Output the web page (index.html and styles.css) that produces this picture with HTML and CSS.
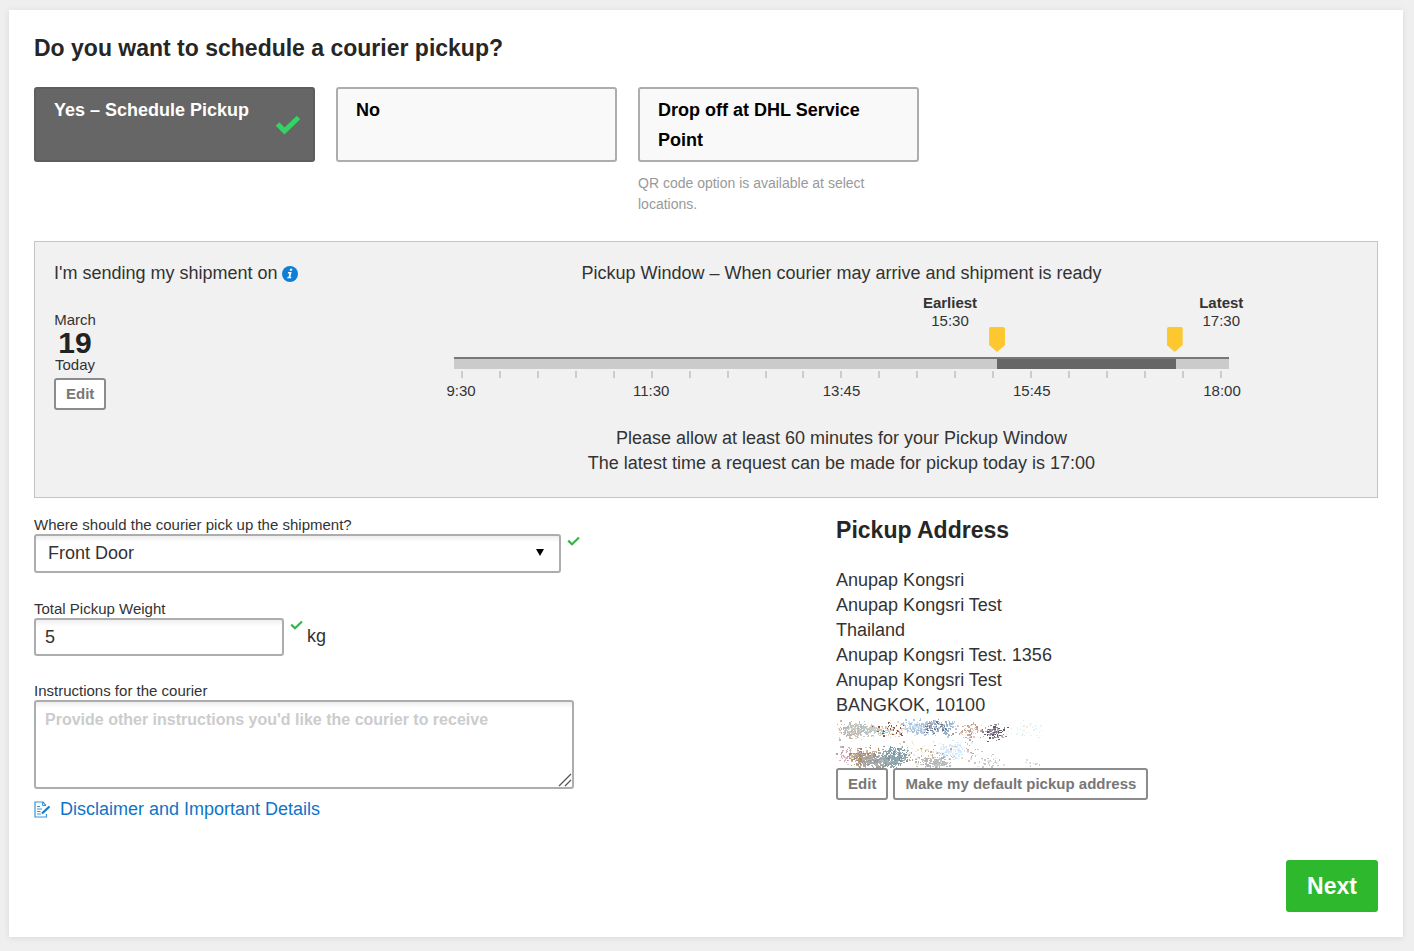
FILE: index.html
```html
<!DOCTYPE html>
<html lang="en">
<head>
<meta charset="utf-8">
<meta name="viewport" content="width=device-width, initial-scale=1">
<title>Schedule a courier pickup</title>
<link rel="stylesheet" href="styles.css">
</head>
<body>
<main class="card">
  <h1 class="title">Do you want to schedule a courier pickup?</h1>

  <div class="options">
    <button type="button" class="option option-selected" aria-pressed="true">
      <span>Yes – Schedule Pickup</span>
      <svg class="option-check" width="26" height="20" viewBox="0 0 26 20" aria-hidden="true"><path d="M2.500 9L9.500 16L23.500 2.500" fill="none" stroke="#33d463" stroke-width="5"/></svg>
    </button>
    <button type="button" class="option" aria-pressed="false">No</button>
    <div class="option-group">
      <button type="button" class="option" aria-pressed="false">Drop off at DHL Service Point</button>
      <p class="option-note">QR code option is available at select locations.</p>
    </div>
  </div>

  <section class="window">
    <div class="date">
      <p class="date-label">I'm sending my shipment on
        <svg width="16" height="16" viewBox="0 0 16 16" aria-hidden="true"><circle cx="8" cy="8" r="8" fill="#0f7fd6"/><path d="M8.1 2.8h2.3l-.5 2H7.6zM6.1 6.1h3.5l-1.2 4.8h1l-.3 1.3H5.2l.3-1.3h1l.9-3.5h-1.600z" fill="#fff"/></svg>
      </p>
      <div class="day">
        <span>March</span>
        <strong class="day-number">19</strong>
        <span>Today</span>
      </div>
      <button type="button" class="small-button">Edit</button>
    </div>

    <div class="timeline">
      <h2 class="timeline-title">Pickup Window – When courier may arrive and shipment is ready</h2>
      <div class="slider">
        <label class="bound bound-earliest" for="earliest"><b>Earliest</b><span>15:30</span></label>
        <label class="bound bound-latest" for="latest"><b>Latest</b><span>17:30</span></label>
        <input class="handle" id="earliest" type="range" min="0" max="1000" value="705">
        <input class="handle" id="latest" type="range" min="0" max="1000" value="939">
        <div class="track"><div class="track-fill" style="margin-left:70.1%;width:23.1%"></div></div>
      </div>
      <div class="ticks">
        <i></i><i></i><i></i><i></i><i></i><i></i><i></i><i></i><i></i><i></i><i></i><i></i><i></i><i></i><i></i><i></i><i></i><i></i><i></i><i></i><i></i>
      </div>
      <div class="hours"><span>9:30</span><span>11:30</span><span>13:45</span><span>15:45</span><span>18:00</span></div>
      <p class="message">Please allow at least 60 minutes for your Pickup Window<br>The latest time a request can be made for pickup today is 17:00</p>
    </div>
  </section>

  <div class="details">
    <form class="form">
      <div class="field">
        <label for="place">Where should the courier pick up the shipment?</label>
        <div class="control">
          <div class="select-wrap">
            <select id="place" class="box place"><option>Front Door</option></select>
            <svg class="arrow" width="8" height="7" viewBox="0 0 8 7" aria-hidden="true"><path d="M0 0h8L4 7z"/></svg>
          </div>
          <svg class="valid" width="13" height="10" viewBox="0 0 13 10" aria-hidden="true"><path d="M1.200 4.600L5 8.200L12 1.500" fill="none" stroke="#34b54a" stroke-width="2.200"/></svg>
        </div>
      </div>
      <div class="field">
        <label for="weight">Total Pickup Weight</label>
        <div class="control">
          <input id="weight" class="box weight" type="text" value="5">
          <svg class="valid" width="13" height="10" viewBox="0 0 13 10" aria-hidden="true"><path d="M1.200 4.600L5 8.200L12 1.500" fill="none" stroke="#34b54a" stroke-width="2.200"/></svg>
          <span class="unit">kg</span>
        </div>
      </div>
      <div class="field field-notes">
        <label for="notes">Instructions for the courier</label>
        <div class="notes-wrap">
          <textarea id="notes" class="box notes" placeholder="Provide other instructions you'd like the courier to receive"></textarea>
          <svg class="grip" width="14" height="14" viewBox="0 0 14 14" aria-hidden="true"><path d="M1 13L13 1M7 13L13 7" stroke="#555" stroke-width="1.300"/></svg>
        </div>
      </div>
      <a class="disclaimer" href="#">
        <svg width="17" height="17" viewBox="0 0 17 17" fill="none" stroke="#3c93d8" aria-hidden="true"><path d="M11.500 5V4L9 1H1v15h11.500v-3" stroke-width="1.200"/><path d="M8.500 1v3.500h3.500M3 5.500h3M3 8h5M3 10.500h3.500M3 13h4" stroke-width="1"/><path d="M8 12.500L15.500 5.500" stroke="#1779c4" stroke-width="2.200"/></svg>
        <span>Disclaimer and Important Details</span>
      </a>
    </form>

    <section class="address">
      <h2 class="title">Pickup Address</h2>
      <address>Anupap Kongsri<br>Anupap Kongsri Test<br>Thailand<br>Anupap Kongsri Test. 1356<br>Anupap Kongsri Test<br>BANGKOK, 10100</address>
      <svg class="smudge" id="smudge" width="206" height="50" viewBox="0 0 206 50" shape-rendering="crispEdges" aria-hidden="true"></svg>
      <div class="address-actions">
        <button type="button" class="small-button">Edit</button>
        <button type="button" class="small-button">Make my default pickup address</button>
      </div>
    </section>
  </div>

  <div class="footer"><button type="button" class="next">Next</button></div>
</main>
<script src="smudge.js"></script>
</body>
</html>
```
FILE: styles.css
```css
* { box-sizing: border-box; }
body {
  margin: 0;
  padding: 10px 11px 13px 9px;
  background: #efefef;
  color: #333;
  font: 18px/25px "Liberation Sans", Arial, sans-serif;
}
h1, h2, p { margin: 0; font-weight: normal; }
button, input, select, textarea { font: inherit; color: inherit; }
.card {
  padding: 23px 25px 25px;
  background: #fff;
  box-shadow: 0 1px 6px #d8d8d8;
}
.card .title {
  font-size: 23px;
  line-height: 30px;
  font-weight: bold;
  color: #262626;
}
.options {
  display: grid;
  grid-template-columns: repeat(3, 1fr);
  gap: 21px;
  max-width: 885px;
  margin-top: 24px;
  align-items: start;
}
.option {
  display: flex;
  align-items: flex-start;
  justify-content: space-between;
  width: 100%;
  height: 75px;
  padding: 6px 20px 7px 18px;
  border: 2px solid #adadad;
  border-radius: 3px;
  background: #f9f9f9;
  color: #000;
  font-weight: bold;
  line-height: 30px;
  text-align: left;
}
.option-selected {
  padding-right: 12px;
  border-color: #5e5e5e;
  background: #666;
  color: #fff;
}
.option-check { margin-top: 20px; }
.option-note {
  margin-top: 11px;
  padding-right: 40px;
  color: #999;
  font-size: 14px;
  line-height: 21px;
}
.window {
  display: flex;
  margin-top: 26px;
  padding: 19px 148px 21px 19px;
  border: 1px solid #c4c4c4;
  background: #f1f1f1;
}
.date { flex: 0 0 400px; }
.date-label { display: flex; align-items: center; gap: 4px; }
.day {
  display: flex;
  flex-direction: column;
  width: 42px;
  margin: 25px 0 4px;
  align-items: center;
  font-size: 15px;
  line-height: 18px;
}
.day-number { font-size: 30px; line-height: 27px; color: #222; }
.small-button {
  height: 32px;
  padding: 0 10px;
  border: 2px solid #8c8c8c;
  border-radius: 3px;
  background: #fff;
  color: #777;
  font-size: 15px;
  line-height: 28px;
  font-weight: bold;
}
.timeline { flex: 1; }
.timeline-title { font-size: 18px; text-align: center; }
.slider { position: relative; margin-top: 8px; padding-top: 63px; }
.bound {
  position: absolute;
  top: 0;
  display: flex;
  flex-direction: column;
  width: 60px;
  margin-left: -30px;
  align-items: center;
  font-size: 15px;
  line-height: 18px;
}
.bound-earliest { left: 64%; }
.bound-latest { left: 99%; }
.handle {
  position: absolute;
  left: 0;
  top: 33px;
  width: 100%;
  height: 25px;
  margin: 0;
  appearance: none;
  background: none;
  pointer-events: none;
}
.handle::-webkit-slider-thumb {
  appearance: none;
  width: 16px;
  height: 25px;
  border-radius: 2px;
  background: #fdc82f;
  clip-path: polygon(0 0, 100% 0, 100% 72%, 50% 100%, 0 72%);
  pointer-events: auto;
}
.track { height: 12px; border-top: 2px solid #777; background: #cbcbcb; }
.track-fill { height: 10px; background: #666; }
.ticks {
  display: flex;
  justify-content: space-between;
  margin-top: 2px;
  padding: 0 7px;
}
.ticks i { width: 2px; height: 7px; background: #ccc; }
.hours {
  display: flex;
  justify-content: space-between;
  margin: 3px -13px 0;
  font-size: 15px;
  line-height: 20px;
}
.hours span { width: 40px; text-align: center; }
.message { margin-top: 25px; text-align: center; }
.details {
  display: grid;
  grid-template-columns: 148fr 100fr;
  margin-top: 17px;
}
.field { display: flex; flex-direction: column; margin-bottom: 26px; }
.field label { padding-top: 1px; font-size: 15px; line-height: 18px; }
.control { display: flex; align-items: flex-start; }
.box {
  padding: 0 9px;
  border: 2px solid #adadad;
  border-radius: 3px;
  background: #fff linear-gradient(#eee, #fff) 0 0 / 100% 6px no-repeat;
  outline: none;
}
.select-wrap { position: relative; flex: 0 1 527px; }
.place { display: block; width: 100%; height: 39px; padding: 0 12px; appearance: none; }
.arrow { position: absolute; right: 17px; top: 15px; pointer-events: none; }
.valid { margin: 2px 0 0 6px; }
.weight { width: 250px; height: 38px; }
.unit { margin: 6px 0 0 4px; }
.notes-wrap { position: relative; width: 540px; }
.notes { display: block; width: 100%; height: 89px; padding: 5px 9px; resize: none; }
.notes::placeholder { color: #ccc; font-size: 16px; font-weight: bold; }
.grip { position: absolute; right: 2px; bottom: 2px; }
.field-notes { margin-bottom: 8px; }
.field:nth-child(2) { margin-bottom: 25px; }
.disclaimer { display: flex; align-items: center; gap: 9px; color: #0f74c8; text-decoration: none; }
.address address { margin-top: 23px; font-style: normal; }
.smudge { display: block; }
.address-actions { display: flex; gap: 5px; }
.footer { display: flex; justify-content: flex-end; margin-top: 38px; }
.next {
  width: 92px;
  height: 52px;
  padding: 0;
  border: 0;
  border-radius: 3px;
  background: #2db82d;
  color: #fff;
  font-size: 23px;
  font-weight: bold;
}
```
FILE: smudge.js
```js
// Speckled clusters that hide the contact lines: x, y, spread x, spread y, count, colours
const clusters = [
  [16, 12, 14, 5, 150, ["#c9b5a2", "#b9b6b3", "#d8d0c8"]],
  [32, 11, 16, 4, 130, ["#a9c7d8", "#c8d3bd", "#c4c9cb"]],
  [56, 11, 15, 5, 70, ["#e0bfae", "#e6dcc0", "#8d5548"]],
  [80, 9, 12, 5, 170, ["#b7d0e4", "#a9c4dc", "#d4e3ef"]],
  [97, 8, 10, 5, 90, ["#74738d", "#a5a4b4", "#aecbe2"]],
  [112, 10, 6, 5, 50, ["#b4cfe5", "#9aaec4"]],
  [133, 12, 11, 5, 75, ["#cda797", "#dfc9bd", "#bc988b"]],
  [158, 14, 9, 5, 100, ["#62586b", "#8f8694", "#b5a9aa"]],
  [188, 11, 20, 5, 50, ["#e6f4fb", "#def0fa", "#f5ead9"]],
  [14, 36, 16, 6, 80, ["#d5afc3", "#c899ae", "#ddd1d6"]],
  [26, 38, 12, 6, 170, ["#b99772", "#a78864", "#c9b9a2"]],
  [44, 42, 20, 5, 330, ["#a9a9a9", "#b5b5b5", "#989da0"]],
  [58, 38, 11, 6, 170, ["#7897a4", "#8ba6af", "#93a9b1"]],
  [82, 34, 18, 7, 70, ["#ece3c4", "#efe9dc", "#caaa86"]],
  [100, 43, 14, 5, 160, ["#bbb", "#c6c6c6", "#b2b4b8"]],
  [115, 32, 12, 6, 100, ["#d5e8f9", "#e0effc"]],
  [130, 31, 12, 8, 30, ["#b4aeb5", "#dac5b5", "#e4dfeb"]],
  [154, 43, 11, 4, 35, ["#c8c8c8", "#e0e0e0"]],
  [196, 44, 9, 3, 14, ["#ccc", "#ddd"]]
];
let seed = 7;
const random = () => (seed = (seed * 16807) % 2147483647) / 2147483647;
const smudge = document.getElementById("smudge");
for (const [x, y, sx, sy, count, colours] of clusters) {
  for (let n = 0; n < count; n++) {
    const dot = document.createElementNS("http://www.w3.org/2000/svg", "rect");
    dot.setAttribute("x", Math.round(x + (random() + random() + random() - 1.5) * sx * 1.2));
    dot.setAttribute("y", Math.round(y + (random() + random() + random() - 1.5) * sy * 1.5));
    dot.setAttribute("width", random() > 0.5 ? 2 : 1);
    dot.setAttribute("height", random() > 0.6 ? 2 : 1);
    dot.setAttribute("fill", colours[Math.floor(random() * colours.length)]);
    smudge.append(dot);
  }
}
```
